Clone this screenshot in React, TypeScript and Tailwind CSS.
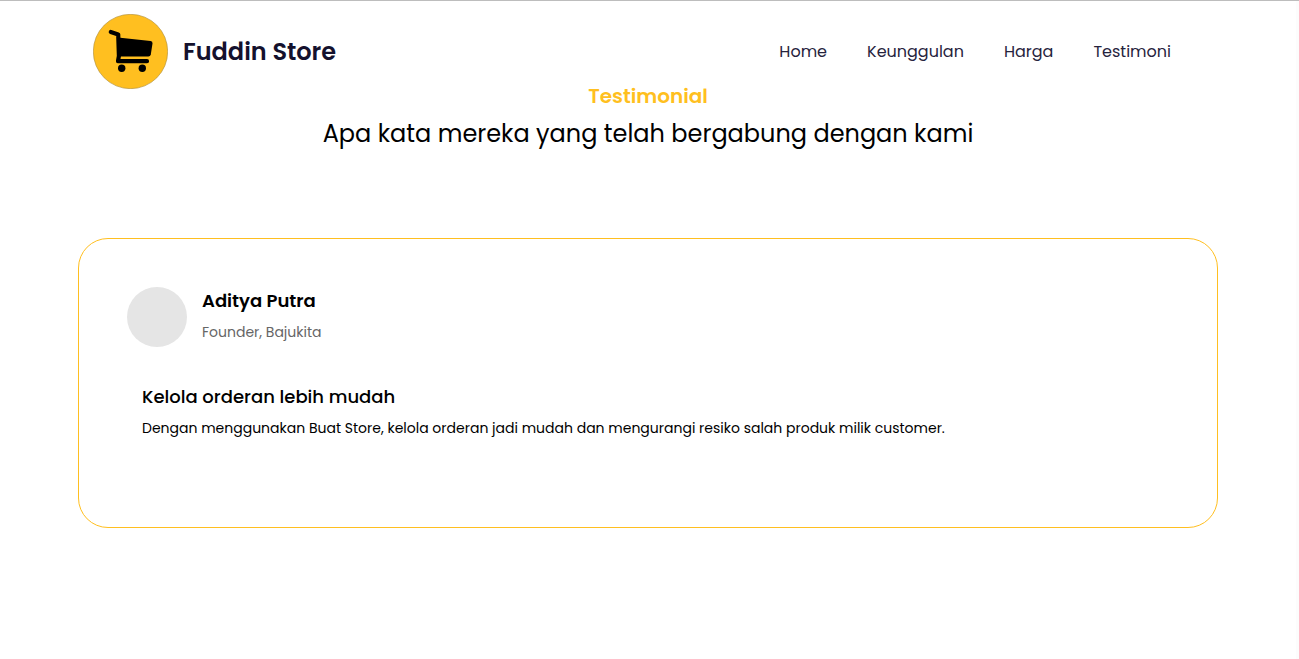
const links = [
  { label: "Home", href: "#home" },
  { label: "Keunggulan", href: "#keunggulan" },
  { label: "Harga", href: "#harga" },
  { label: "Testimoni", href: "#testimoni" },
];

function CartLogo() {
  return (
    <svg viewBox="0 0 75 75" className="size-[75px] shrink-0" aria-hidden="true">
      <circle cx="37.5" cy="37.5" r="37.2" fill="#ffbf20" stroke="#a98a35" strokeWidth="0.6" />
      <path d="M25 23.4 L57.6 27 Q59.8 27.3 59.5 29.4 L57.8 40.4 Q57.4 42.4 55.4 42.4 H26 Z" />
      <path
        d="M17.8 18 L25.2 20.4 L25.9 42 L25 47.2 H54"
        fill="none"
        stroke="#000"
        strokeWidth="4.2"
        strokeLinecap="round"
        strokeLinejoin="round"
      />
      <circle cx="28.7" cy="54.3" r="3.7" />
      <circle cx="49.3" cy="54.3" r="3.7" />
    </svg>
  );
}

function Header() {
  return (
    <header className="flex items-center justify-between pl-[15px] pr-[47px]">
      <a href="#home" className="flex items-center gap-[15px]">
        <CartLogo />
        <span className="text-2xl font-semibold text-[#14112d]">Fuddin Store</span>
      </a>
      <nav className="flex gap-10 text-base text-[#26233d]">
        {links.map((link) => (
          <a key={link.label} href={link.href}>
            {link.label}
          </a>
        ))}
      </nav>
    </header>
  );
}

function TestimonialCard() {
  return (
    <article className="rounded-[30px] border border-[#ffbf20] px-12 pt-12 pb-[86px]">
      <div className="flex items-start gap-[15px]">
        <div className="size-[60px] rounded-full bg-[#e5e5e5]" />
        <div>
          <h3 className="text-lg leading-7 font-semibold">Aditya Putra</h3>
          <p className="mt-1 text-sm leading-[26px] text-[#666666]">Founder, Bajukita</p>
        </div>
      </div>
      <div className="px-[15px] pt-9">
        <h4 className="text-lg leading-7 font-medium">Kelola orderan lebih mudah</h4>
        <p className="mt-1 text-sm leading-[26px]">
          Dengan menggunakan Buat Store, kelola orderan jadi mudah dan mengurangi resiko salah produk
          milik customer.
        </p>
      </div>
    </article>
  );
}

export default function App() {
  return (
    <div className="border-t border-[#bdbdbd]">
      <div className="min-h-screen border-r-[3px] border-[#fcfcfc] bg-white font-['Poppins','Inter',sans-serif] text-black">
        <div className="mx-auto max-w-[1140px] pt-[13px]">
          <Header />
          <main id="testimoni">
            <div className="text-center">
              <h2 className="text-xl leading-[14px] font-semibold text-[#ffbf20]">Testimonial</h2>
              <p className="mt-[13px] text-2xl leading-9">
                Apa kata mereka yang telah bergabung dengan kami
              </p>
            </div>
            <div className="pt-[86px]">
              <TestimonialCard />
            </div>
          </main>
        </div>
      </div>
    </div>
  );
}
